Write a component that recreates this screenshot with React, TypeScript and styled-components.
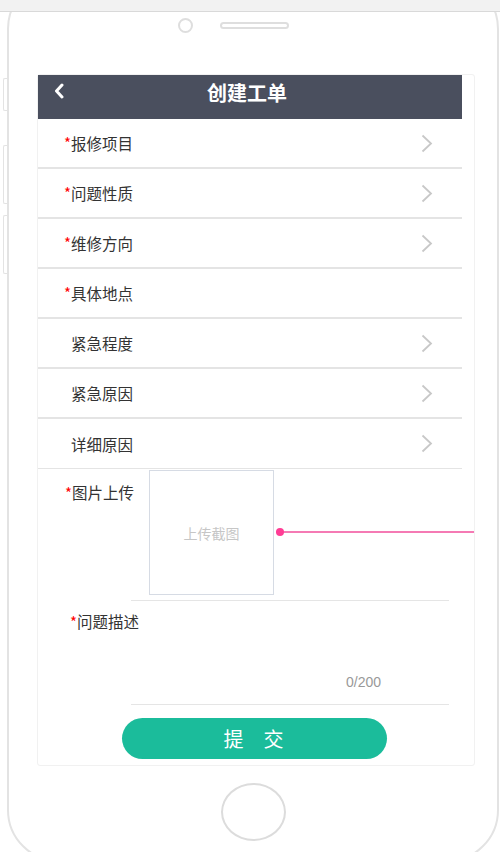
import React from "react";
import styled, { createGlobalStyle } from "styled-components";

const GlobalStyle = createGlobalStyle`
  html, body {
    margin: 0;
    padding: 0;
    background: #fff;
    font-family: "Noto Sans CJK SC", "Liberation Sans", sans-serif;
  }
`;

const Page = styled.div`
  width: 500px;
  height: 852px;
  overflow: hidden;
  position: relative;
  background: #fff;
`;

const TopBar = styled.div`
  position: relative;
  z-index: 2;
  height: 11px;
  background: #f2f2f2;
  border-bottom: 1px solid #d9d9d9;
`;

const Phone = styled.div`
  position: relative;
  box-sizing: border-box;
  margin: -35px 0 0 7px;
  width: 492px;
  height: 885px;
  border: 2px solid #e3e3e3;
  border-radius: 52px;
`;

const SideKey = styled.div<{ $top: number; $h: number }>`
  position: absolute;
  left: -6px;
  top: ${(p) => p.$top}px;
  width: 3px;
  height: ${(p) => p.$h}px;
  border: 1px solid #e3e3e3;
  border-right: none;
  border-radius: 2px 0 0 2px;
  background: #fff;
`;

const Sensors = styled.div`
  display: flex;
  align-items: center;
  gap: 27px;
  padding: 39px 0 0 169px;
`;

const Camera = styled.div`
  box-sizing: border-box;
  width: 15px;
  height: 15px;
  border: 2px solid #dedede;
  border-radius: 50%;
`;

const Speaker = styled.div`
  box-sizing: border-box;
  width: 69px;
  height: 7px;
  border: 2px solid #dedede;
  border-radius: 4px;
`;

const Screen = styled.div`
  box-sizing: border-box;
  margin: 41px 0 0 28px;
  width: 438px;
  border: 1px solid #f1f1f1;
  border-radius: 3px;
  padding: 0 12px 6px 0;
  display: flex;
  flex-direction: column;
  & > * {
    flex-shrink: 0;
  }
`;

const Header = styled.div`
  position: relative;
  box-sizing: border-box;
  height: 44px;
  padding: 0 6px 10px 0;
  background: #4a4f5e;
  display: flex;
  align-items: center;
  justify-content: center;
  color: #fff;
  font-size: 20px;
  font-weight: 700;
`;

const Back = styled.svg`
  position: absolute;
  left: 15px;
  top: 8px;
`;

const Row = styled.div<{ $thin?: boolean }>`
  box-sizing: border-box;
  height: 50px;
  display: flex;
  align-items: center;
  padding: 0 29px 0 26px;
  border-bottom: ${(p) => (p.$thin ? "1px" : "2px")} solid #e4e4e4;
`;

const Star = styled.span<{ $hide?: boolean }>`
  color: #f00;
  font-size: 15px;
  line-height: 16px;
  visibility: ${(p) => (p.$hide ? "hidden" : "visible")};
`;

const Label = styled.span`
  font-size: 15.5px;
  color: #333;
  line-height: 16px;
`;

const Arrow = styled.svg`
  margin-left: auto;
`;

const UploadSection = styled.div`
  display: flex;
  padding-top: 1px;
`;

const UploadLabel = styled.div`
  box-sizing: border-box;
  width: 111px;
  padding: 14px 0 0 27px;
  line-height: 16px;
`;

const UploadBox = styled.div`
  position: relative;
  box-sizing: border-box;
  width: 125px;
  height: 125px;
  border: 1px solid #d6dbe4;
  display: flex;
  align-items: center;
  justify-content: center;
  color: #c6c6c6;
  font-size: 14px;
`;

const Connector = styled.div`
  position: absolute;
  left: calc(100% + 3px);
  top: 60px;
  width: 198px;
  height: 2px;
  background: #f57ab4;
  &::before {
    content: "";
    position: absolute;
    left: 0;
    top: -3px;
    width: 8px;
    height: 8px;
    border-radius: 50%;
    background: #ff3d95;
  }
`;

const Divider = styled.div<{ $mt: number }>`
  margin: ${(p) => p.$mt}px 0 0 93px;
  width: 318px;
  height: 1px;
  background: #e5e5e5;
`;

const Describe = styled.div`
  padding: 12px 0 0 32px;
  line-height: 16px;
`;

const Counter = styled.div`
  margin-top: 44px;
  padding-right: 81px;
  text-align: right;
  font-family: "Liberation Sans", Arial, sans-serif;
  font-size: 14px;
  line-height: 16px;
  color: #999;
`;

const Submit = styled.button`
  margin: 13px 0 0 84px;
  width: 265px;
  height: 41px;
  border: none;
  border-radius: 21px;
  background: #1bbc9b;
  color: #fff;
  font-family: "Noto Sans CJK SC", sans-serif;
  font-size: 20px;
  padding: 0 2px 0 0;
`;

const HomeKey = styled.div`
  box-sizing: border-box;
  margin: 17px 0 0 212px;
  width: 65px;
  height: 58px;
  border: 2px solid #dcdcdc;
  border-radius: 50%;
`;

const items = [
  { label: "报修项目", req: true, arrow: true },
  { label: "问题性质", req: true, arrow: true },
  { label: "维修方向", req: true, arrow: true },
  { label: "具体地点", req: true, arrow: false },
  { label: "紧急程度", req: false, arrow: true },
  { label: "紧急原因", req: false, arrow: true },
  { label: "详细原因", req: false, arrow: true },
];

export default function App() {
  return (
    <Page>
      <GlobalStyle />
      <TopBar />
      <Phone>
        <SideKey $top={99} $h={31} />
        <SideKey $top={166} $h={57} />
        <SideKey $top={236} $h={57} />
        <Sensors>
          <Camera />
          <Speaker />
        </Sensors>
        <Screen>
          <Header>
            <Back width="12" height="16" viewBox="0 0 12 16">
              <path d="M9 2 L3.5 8 L9 14" fill="none" stroke="#fff" strokeWidth="3" strokeLinecap="round" strokeLinejoin="round" />
            </Back>
            创建工单
          </Header>
          {items.map((it, i) => (
            <Row key={it.label} $thin={i === items.length - 1}>
              <Star $hide={!it.req}>*</Star>
              <Label>{it.label}</Label>
              {it.arrow && (
                <Arrow width="12" height="19" viewBox="0 0 12 19">
                  <path d="M1.5 1.5 L10 9.5 L1.5 17.5" fill="none" stroke="#c8c8c8" strokeWidth="1.8" />
                </Arrow>
              )}
            </Row>
          ))}
          <UploadSection>
            <UploadLabel>
              <Star>*</Star>
              <Label>图片上传</Label>
            </UploadLabel>
            <UploadBox>
              上传截图
              <Connector />
            </UploadBox>
          </UploadSection>
          <Divider $mt={5} />
          <Describe>
            <Star>*</Star>
            <Label>问题描述</Label>
          </Describe>
          <Counter>0/200</Counter>
          <Divider $mt={14} />
          <Submit>提　交</Submit>
        </Screen>
        <HomeKey />
      </Phone>
    </Page>
  );
}
